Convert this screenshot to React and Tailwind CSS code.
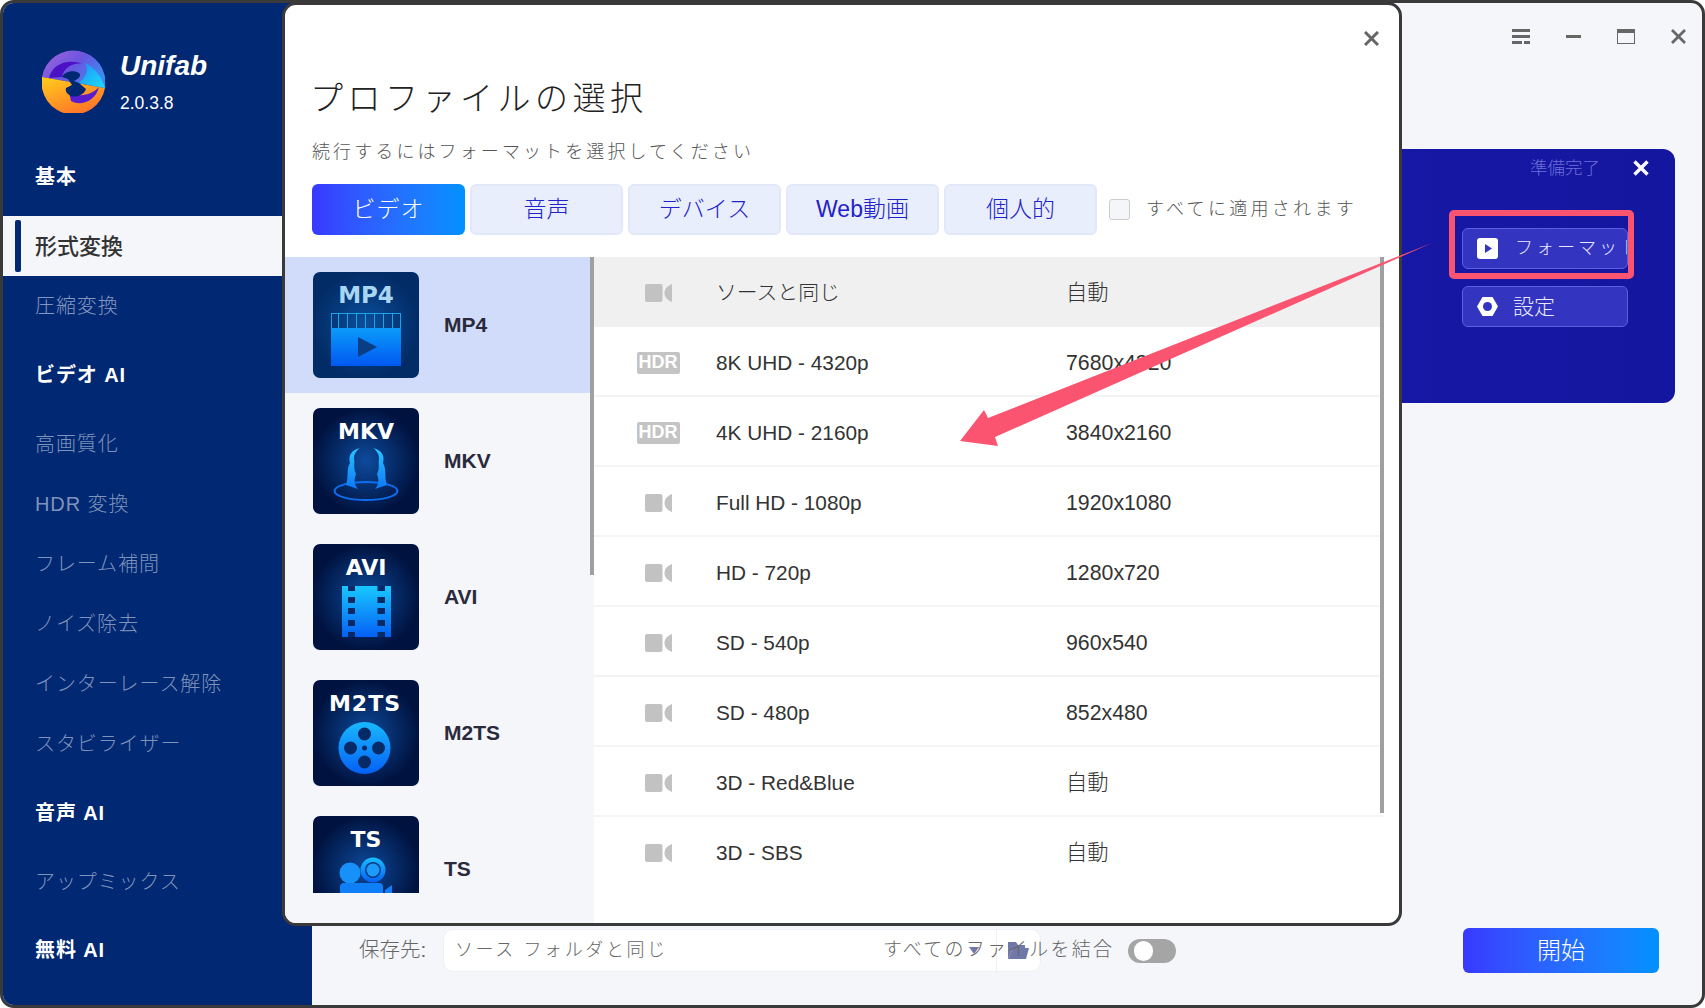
import React from "react"

const navGroups = [
  { top: "mt-[9px]", title: "ビデオ AI", items: ["高画質化", "HDR 変換", "フレーム補間", "ノイズ除去", "インターレース解除", "スタビライザー"] },
  { top: "mt-[9px]", title: "音声 AI", items: ["アップミックス"] },
  { top: "mt-[8px]", title: "無料 AI", items: [] },
]

const tabs = ["ビデオ", "音声", "デバイス", "Web動画", "個人的"]

const presets = [
  { name: "ソースと同じ", size: "自動", active: true },
  { name: "8K UHD - 4320p", size: "7680x4320", hdr: true },
  { name: "4K UHD - 2160p", size: "3840x2160", hdr: true },
  { name: "Full HD - 1080p", size: "1920x1080" },
  { name: "HD - 720p", size: "1280x720" },
  { name: "SD - 540p", size: "960x540" },
  { name: "SD - 480p", size: "852x480" },
  { name: "3D - Red&Blue", size: "自動" },
  { name: "3D - SBS", size: "自動" },
]

function Logo() {
  return (
    <svg width="63" height="63" viewBox="0 0 63 63" className="shrink-0">
      <defs>
        <linearGradient id="logoTop" x1="0" y1="0" x2="1" y2="0.6">
          <stop offset="0" stopColor="#a565d8" />
          <stop offset="0.55" stopColor="#6a55e0" />
          <stop offset="1" stopColor="#3a8cf0" />
        </linearGradient>
        <linearGradient id="logoBottom" x1="0" y1="0" x2="0.6" y2="1">
          <stop offset="0" stopColor="#ffcf1c" />
          <stop offset="1" stopColor="#ff7428" />
        </linearGradient>
        <linearGradient id="logoCyan" x1="0" y1="0" x2="1" y2="1">
          <stop offset="0" stopColor="#1a90f5" />
          <stop offset="1" stopColor="#1fdcff" />
        </linearGradient>
      </defs>
      <path d="M0 27 A31.5 31.5 0 0 1 63 38 Z" fill="url(#logoTop)" />
      <path d="M0 27 L63 38 A31.5 31.5 0 0 1 0 27 Z" fill="url(#logoBottom)" />
      <path d="M7 28 C10 14 26 8 41 14 C32 12 22 17 20 27 Z" fill="#4a12c4" />
      <path d="M43 13 C52 17 60 27 63 38 L37 33 C43 28 48 21 43 13 Z" fill="url(#logoCyan)" />
      <path d="M27 42 C37 48 50 45 57 37 C54 50 40 57 29 51 Z" fill="#5a1cd0" />
      <path d="M20 27 C22 22 31 19 37 23 C40 26 36 29 32 31 L37 33 L44 39 C42 45 34 48 29 46 C25 44 23 41 24 38 L30 35 L26 29 Z" fill="#002873" />
    </svg>
  )
}

function Mp4Icon() {
  return (
    <svg width="106" height="106" viewBox="0 0 106 106" className="shrink-0">
      <defs>
        <radialGradient id="mp4Bg"><stop offset="0" stopColor="#0b4f9c" /><stop offset="1" stopColor="#022c66" /></radialGradient>
        <linearGradient id="mp4Film" x1="0" y1="0" x2="0" y2="1"><stop offset="0" stopColor="#0c9bfa" /><stop offset="1" stopColor="#0058f2" /></linearGradient>
      </defs>
      <rect width="106" height="106" rx="7" fill="url(#mp4Bg)" />
      <text x="53" y="31" textAnchor="middle" fontFamily="DejaVu Sans" fontWeight="700" fontSize="23" fill="#a9d6f2">MP4</text>
      <rect x="18.5" y="41.5" width="69" height="15" fill="none" stroke="#1ba4ea" />
      {[28, 37, 46, 55, 64, 73, 82].map((x) => (
        <rect key={x} x={x - 3} y="42" width="1" height="14" fill="#1ba4ea" />
      ))}
      <rect x="18" y="56" width="70" height="38" fill="url(#mp4Film)" />
      <path d="M45 65 L64 75 L45 85 Z" fill="#0b3d85" />
    </svg>
  )
}

function MkvIcon() {
  return (
    <svg width="106" height="106" viewBox="0 0 106 106" className="shrink-0">
      <defs>
        <radialGradient id="mkvBg"><stop offset="0" stopColor="#0d4a9c" /><stop offset="1" stopColor="#001340" /></radialGradient>
        <linearGradient id="mkvWing" x1="0" y1="0" x2="0" y2="1"><stop offset="0" stopColor="#2cc4ff" /><stop offset="1" stopColor="#0d78f5" /></linearGradient>
      </defs>
      <rect width="106" height="106" rx="7" fill="url(#mkvBg)" />
      <text x="53" y="31" textAnchor="middle" fontFamily="DejaVu Sans" fontWeight="700" fontSize="22" fill="#ffffff">MKV</text>
      <ellipse cx="53" cy="83" rx="31.5" ry="9" fill="none" stroke="#0d6ef0" strokeWidth="2" />
      <path d="M47 40 C38 42 35 48 37 55 C33 62 36 68 33 77 L45 81 C41 76 41 72 43 66 C40 60 42 56 41 50 C41 46 44 42 47 40 Z" fill="url(#mkvWing)" />
      <path d="M60 40 C69 42 72 48 70 55 C74 62 71 68 74 77 L62 81 C66 76 66 72 64 66 C67 60 65 56 66 50 C66 46 63 42 60 40 Z" fill="url(#mkvWing)" />
    </svg>
  )
}

function AviIcon() {
  return (
    <svg width="106" height="106" viewBox="0 0 106 106" className="shrink-0">
      <defs>
        <radialGradient id="aviBg"><stop offset="0" stopColor="#0d4a9c" /><stop offset="1" stopColor="#001340" /></radialGradient>
        <linearGradient id="aviFilm" x1="0" y1="0" x2="0" y2="1"><stop offset="0" stopColor="#18c8ff" /><stop offset="1" stopColor="#0560f5" /></linearGradient>
      </defs>
      <rect width="106" height="106" rx="7" fill="url(#aviBg)" />
      <text x="53" y="31" textAnchor="middle" fontFamily="DejaVu Sans" fontWeight="700" fontSize="22" fill="#ffffff">AVI</text>
      <rect x="29" y="42" width="49" height="51" fill="url(#aviFilm)" />
      {[42, 53, 64, 76, 88].map((y) => (
        <g key={y} fill="#052a66">
          <rect x="35" y={y} width="7" height={y === 42 || y === 88 ? 5 : 6} />
          <rect x="64.5" y={y} width="7.5" height={y === 42 || y === 88 ? 5 : 6} />
        </g>
      ))}
    </svg>
  )
}

function M2tsIcon() {
  return (
    <svg width="106" height="106" viewBox="0 0 106 106" className="shrink-0">
      <defs>
        <radialGradient id="m2tsBg"><stop offset="0" stopColor="#0d4a9c" /><stop offset="1" stopColor="#001340" /></radialGradient>
        <linearGradient id="m2tsReel" x1="0" y1="0" x2="0" y2="1"><stop offset="0" stopColor="#18b8ff" /><stop offset="1" stopColor="#0560f5" /></linearGradient>
      </defs>
      <rect width="106" height="106" rx="7" fill="url(#m2tsBg)" />
      <text x="52" y="31" textAnchor="middle" fontFamily="DejaVu Sans" fontWeight="700" fontSize="22" letterSpacing="1" fill="#ffffff">M2TS</text>
      <circle cx="51.5" cy="68" r="26" fill="url(#m2tsReel)" />
      <g fill="#052a66">
        <circle cx="51.5" cy="54" r="6.5" />
        <circle cx="51.5" cy="82" r="6.5" />
        <circle cx="37.5" cy="68" r="6.5" />
        <circle cx="65.5" cy="68" r="6.5" />
        <circle cx="51.5" cy="68" r="2.5" />
      </g>
    </svg>
  )
}

function TsIcon() {
  return (
    <svg width="106" height="106" viewBox="0 0 106 106" className="shrink-0">
      <defs>
        <radialGradient id="tsBg"><stop offset="0" stopColor="#0d4a9c" /><stop offset="1" stopColor="#001340" /></radialGradient>
        <linearGradient id="tsCam" x1="0" y1="0" x2="0" y2="1"><stop offset="0" stopColor="#18c0ff" /><stop offset="1" stopColor="#0560f5" /></linearGradient>
      </defs>
      <rect width="106" height="106" rx="7" fill="url(#tsBg)" />
      <text x="53" y="31" textAnchor="middle" fontFamily="DejaVu Sans" fontWeight="700" fontSize="22" fill="#ffffff">TS</text>
      <circle cx="60" cy="54" r="12.5" fill="url(#tsCam)" />
      <circle cx="60" cy="54" r="8" fill="#0a3c86" />
      <circle cx="60" cy="54" r="6.5" fill="#1a9cf8" />
      <circle cx="37" cy="57" r="10.5" fill="#1890fa" />
      <rect x="27" y="67" width="43" height="30" rx="4" fill="#0f7ff8" />
      <path d="M72 74 L79 69 V92 L72 86 Z" fill="#0f7ff8" />
    </svg>
  )
}

const formats = [
  { name: "MP4", icon: <Mp4Icon />, selected: true },
  { name: "MKV", icon: <MkvIcon /> },
  { name: "AVI", icon: <AviIcon /> },
  { name: "M2TS", icon: <M2tsIcon /> },
  { name: "TS", icon: <TsIcon /> },
]

function CameraIcon() {
  return (
    <svg width="27" height="18" viewBox="0 0 27 18" fill="#c2c2c2">
      <rect width="17.5" height="18" rx="2" />
      <path d="M19.5 9 C19.5 5 22 2 27 0 V18 C22 16 19.5 13 19.5 9 Z" />
    </svg>
  )
}

function HdrBadge() {
  return (
    <span className="flex h-[22px] w-[43px] items-center justify-center rounded-[2px] bg-[#c4c4c4] text-[18px] font-bold text-white">
      HDR
    </span>
  )
}

function WindowButtons() {
  return (
    <div className="flex items-start justify-end gap-[36px] pr-[16px] pt-[26px]">
      <svg width="18" height="15" viewBox="0 0 18 15" fill="#666">
        <rect width="18" height="3" />
        <rect y="6" width="18" height="3" />
        <rect y="12" width="10" height="3" />
        <rect x="12" y="12" width="6" height="3" />
      </svg>
      <div className="mt-[6px] h-[3px] w-[15px] bg-[#666]" />
      <div className="h-[15px] w-[18px] border border-t-[4px] border-[#666]" />
      <svg width="15" height="15" viewBox="0 0 15 15" stroke="#666" strokeWidth="2.8">
        <path d="M1 1 L14 14 M14 1 L1 14" />
      </svg>
    </div>
  )
}

function Sidebar() {
  return (
    <aside className="flex w-[309px] shrink-0 flex-col bg-[#002873] text-[20px] tracking-[0.9px]">
      <div className="flex h-[144px] items-start gap-[15px] pl-[39px] pt-[47px]">
        <Logo />
        <div className="text-white">
          <div className="text-[28px] font-bold italic leading-[32px] tracking-normal">Unifab</div>
          <div className="mt-[10px] text-[17.5px] leading-[22px] tracking-normal">2.0.3.8</div>
        </div>
      </div>
      <div className="flex h-[60px] items-center pl-[32px] font-bold text-white">基本</div>
      <div className="relative mt-[9px] flex h-[60px] items-center bg-[#f4f6fa] pl-[32px] text-[22px] font-medium tracking-normal text-[#333]">
        <span className="absolute left-[12px] top-[4px] h-[52px] w-[6px] rounded-[2px] bg-[#002873]" />
        形式変換
      </div>
      <div className="flex h-[60px] items-center pl-[32px] text-[#8497bf]">圧縮変換</div>
      {navGroups.map((g) => (
        <div key={g.title}>
          <div className={`${g.top} flex h-[60px] items-center pl-[32px] font-bold text-white`}>{g.title}</div>
          <div className="mt-[9px]">
            {g.items.map((item) => (
              <div key={item} className="flex h-[60px] items-center pl-[32px] text-[#7f93bb]">
                {item}
              </div>
            ))}
          </div>
        </div>
      ))}
    </aside>
  )
}

function CardButton({ icon, children, narrow }) {
  return (
    <div className={`flex h-[41px] w-[166px] items-center overflow-hidden whitespace-nowrap rounded-[6px] border border-[#5a60e0] bg-[#3335c0] pl-[14px] text-[#e8e8ff] ${narrow ? "gap-[17px] text-[18px] tracking-[3px]" : "gap-[15px] text-[21px]"}`}>
      {icon}
      <span>{children}</span>
    </div>
  )
}

function ReadyCard() {
  return (
    <div className="ml-[28px] mr-[27px] mt-[105px] flex h-[254px] flex-col items-end rounded-[12px] bg-gradient-to-r from-[#1b22bd] to-[#15169f] pr-[47px]">
      <div className="mr-[-21px] mt-[7px] flex h-[24px] items-center gap-[33px]">
        <span className="text-[17.5px] text-[#6a6fd8]">準備完了</span>
        <svg width="16" height="16" viewBox="0 0 16 16" stroke="#fff" strokeWidth="3.4">
          <path d="M1.5 1.5 L14.5 14.5 M14.5 1.5 L1.5 14.5" />
        </svg>
      </div>
      <div className="mt-[48px] flex flex-col gap-[17px]">
        <CardButton
          narrow
          icon={
            <svg width="21" height="21" viewBox="0 0 21 21" className="shrink-0">
              <rect width="21" height="21" rx="3" fill="#fff" />
              <path d="M8 6 L15 10.5 L8 15 Z" fill="#3335c0" />
            </svg>
          }
        >
          フォーマット
        </CardButton>
        <CardButton
          icon={
            <svg width="21" height="21" viewBox="0 0 21 21" className="shrink-0">
              <path d="M5.5 1 H15.5 L21 10.5 L15.5 20 H5.5 L0 10.5 Z" fill="#fff" />
              <circle cx="10.5" cy="10.5" r="4.5" fill="#3335c0" />
            </svg>
          }
        >
          設定
        </CardButton>
      </div>
    </div>
  )
}

function BottomBar() {
  return (
    <div className="mt-auto flex items-center pb-[32px] pl-[47px] pr-[43px] text-[#666]">
      <span className="w-[68px] whitespace-nowrap text-[20.5px]">保存先:</span>
      <div className="ml-[16px] flex h-[43px] w-[598px] items-center rounded-[10px] border border-[#eef0f5] bg-white">
        <span className="ml-[11px] flex-1 whitespace-nowrap text-[18px] tracking-[2.6px]">ソース フォルダと同じ</span>
        <svg width="10" height="7" viewBox="0 0 10 7" className="mr-[17px]" fill="#7078a8">
          <path d="M0 0 H10 L5 7 Z" />
        </svg>
        <div className="flex h-full w-[44px] items-center justify-center border-l border-[#eef0f5]">
          <svg width="21" height="17" viewBox="0 0 21 17" fill="#7078a8">
            <path d="M0 0 H8 L10 3 H17 V6 H5 L0 17 Z" />
            <path d="M5 6 H21 L18 17 H0 Z" />
          </svg>
        </div>
      </div>
      <span className="relative -ml-[158px] whitespace-nowrap text-[19px] tracking-[2.2px]">すべてのファイルを結合</span>
      <div className="ml-[14px] flex h-[24px] w-[48px] items-center rounded-full bg-[#a5a5a5] pl-[6px]">
        <div className="h-[20px] w-[19px] rounded-full bg-white" />
      </div>
      <button className="ml-auto h-[45px] w-[196px] rounded-[6px] bg-gradient-to-r from-[#3838ff] to-[#0091ff] text-[24px] text-white">
        開始
      </button>
    </div>
  )
}

function ProfileDialog() {
  return (
    <div className="absolute left-[282px] top-[2px] flex h-[924px] w-[1120px] flex-col overflow-hidden rounded-[14px] border-[3px] border-[#3a3a3a] bg-white">
      <div className="relative h-[252px] shrink-0 pl-[27px]">
        <svg width="15" height="15" viewBox="0 0 15 15" stroke="#666" strokeWidth="3" className="absolute right-[20px] top-[26px]">
          <path d="M1 1 L14 14 M14 1 L1 14" />
        </svg>
        <h1 className="-ml-[2px] pt-[74px] text-[33px] leading-[40px] tracking-[4.5px] text-[#222]">プロファイルの選択</h1>
        <p className="mt-[20px] text-[18px] leading-[26px] tracking-[3.1px] text-[#555]">続行するにはフォーマットを選択してください</p>
        <div className="mt-[19px] flex items-center gap-[5px]">
          {tabs.map((t, i) => (
            <div
              key={t}
              className={
                i === 0
                  ? "flex h-[51px] w-[153px] items-center justify-center rounded-[6px] bg-gradient-to-r from-[#3838ff] to-[#0091ff] text-[23px] tracking-[1px] text-white"
                  : "flex h-[51px] w-[153px] items-center justify-center rounded-[6px] border-2 border-[#e2e8f8] bg-[#e9eefd] text-[23px] text-[#2222cc]"
              }
            >
              {t}
            </div>
          ))}
          <div className="ml-[7px] h-[21px] w-[21px] rounded-[3px] border border-[#ccc] bg-[#f4f6fa]" />
          <span className="ml-[11px] whitespace-nowrap text-[18px] tracking-[3.3px] text-[#555]">すべてに適用されます</span>
        </div>
      </div>
      <div className="flex flex-1">
        <div className="relative w-[309px] shrink-0 bg-[#f4f6fa]">
          <div className="h-[636px] overflow-hidden">
            {formats.map((f) => (
              <div
                key={f.name}
                className={`flex h-[136px] items-center gap-[25px] pl-[28px] pr-[4px] text-[21px] font-bold text-[#2a2a3a] ${f.selected ? "bg-[#d0dcf9]" : ""}`}
              >
                {f.icon}
                {f.name}
              </div>
            ))}
          </div>
          <div className="absolute right-0 top-0 h-[318px] w-[4px] bg-[#a0a0a0]" />
        </div>
        <div className="relative flex-1">
          <div className="mr-[15px] h-[636px] overflow-hidden">
            {presets.map((p) => (
              <div
                key={p.name}
                className={`flex h-[70px] items-center border-b-2 pt-[3px] text-[#333] last:border-transparent ${p.active ? "border-[#f0f0f0] bg-[#f0f0f0]" : "border-[#f4f4f4]"}`}
              >
                <span className="flex w-[122px] justify-center pl-[6px]">{p.hdr ? <HdrBadge /> : <CameraIcon />}</span>
                <span className="w-[350px] text-[20.8px]">{p.name}</span>
                <span className="mt-[2px] text-[21.3px]">{p.size}</span>
              </div>
            ))}
          </div>
          <div className="absolute right-[15px] top-0 h-[556px] w-[4px] bg-[#a0a0a0]" />
        </div>
      </div>
    </div>
  )
}

export default function App() {
  return (
    <div className="relative h-[1008px] w-[1705px] overflow-hidden bg-white font-['Liberation_Sans','Noto_Sans_CJK_JP',sans-serif] font-light">
      <div className="flex h-[1008px] overflow-hidden rounded-[14px] border-[3px] border-[#3a3a3a] bg-[#f4f6fa]">
        <Sidebar />
        <main className="flex flex-1 flex-col">
          <WindowButtons />
          <ReadyCard />
          <BottomBar />
        </main>
      </div>
      <ProfileDialog />
      {/* red callout drawn over the dialog */}
      <div className="absolute left-[1449px] top-[210px] h-[69px] w-[185px] rounded-[5px] border-[6px] border-[#fb5470]" />
      <svg width="1705" height="1008" className="pointer-events-none absolute left-0 top-0">
        <path d="M960 441 L984 410 L988 418 L1432 243 L995 437 L998 446 Z" fill="#fb5470" />
      </svg>
    </div>
  )
}
